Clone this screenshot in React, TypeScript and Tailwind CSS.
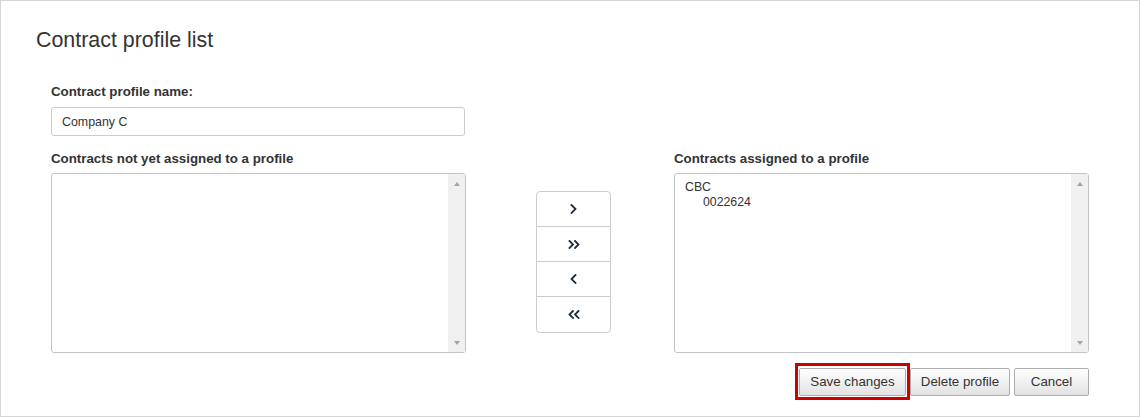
import { useState } from 'react'

type Group = { name: string; contracts: string[] }

const font = { fontFamily: '"Liberation Sans", Arial, sans-serif' }

function Chevron({ dir, double }: { dir: 'left' | 'right'; double?: boolean }) {
  const flip = dir === 'left' ? 'scale(-1,1)' : undefined
  if (double) {
    return (
      <svg width="12" height="9" viewBox="0 0 12 9" className="block">
        <g transform={flip} style={{ transformOrigin: 'center' }} fill="none" stroke="#1f2d3d" strokeWidth="1.8" strokeLinecap="square">
          <polyline points="1.5,1 5,4.5 1.5,8" />
          <polyline points="7,1 10.5,4.5 7,8" />
        </g>
      </svg>
    )
  }
  return (
    <svg width="7" height="10" viewBox="0 0 7 10" className="block">
      <g transform={flip} style={{ transformOrigin: 'center' }} fill="none" stroke="#1f2d3d" strokeWidth="1.8" strokeLinecap="square">
        <polyline points="1.5,1 5.5,5 1.5,9" />
      </g>
    </svg>
  )
}

function ListBox({ groups }: { groups: Group[] }) {
  return (
    <div className="flex h-[180px] w-[415px] rounded-[3px] border border-[#c4c4c4] bg-white">
      <div className="flex-1 px-[10px] pt-[6px] text-[12.3px] leading-[15px] text-[#333]">
        {groups.map(g => (
          <div key={g.name}>
            <div>{g.name}</div>
            {g.contracts.map(c => (
              <div key={c} className="pl-[18px]">{c}</div>
            ))}
          </div>
        ))}
      </div>
      <div className="flex w-[17px] flex-col items-center justify-between bg-[#f0f0f0] pt-[8px] pb-[7px]">
        <div className="h-0 w-0 border-x-[3.5px] border-b-[4px] border-x-transparent border-b-[#a3a3a3]" />
        <div className="h-0 w-0 border-x-[3.5px] border-t-[4px] border-x-transparent border-t-[#a3a3a3]" />
      </div>
    </div>
  )
}

function Btn({ children, w }: { children: React.ReactNode; w: string }) {
  return (
    <button className={`${w} h-[28px] rounded-[2px] border border-[#adadad] bg-gradient-to-b from-[#ffffff] to-[#e2e2e2] text-[13.3px] text-[#333]`}>
      {children}
    </button>
  )
}

export default function App() {
  const [name, setName] = useState('Company C')
  const assigned: Group[] = [{ name: 'CBC', contracts: ['0022624'] }]

  return (
    <div style={font} className="h-[417px] w-[1140px] border border-[#d6d6d6] bg-white pl-[35px] pt-[28px] text-[#333]">
      <h1 className="text-[21.4px] leading-[23px] text-[#333]">Contract profile list</h1>

      <div className="ml-[15px] mt-[31px] w-[1038px]">
        <label className="block text-[13.3px] font-bold leading-[18px]">Contract profile name:</label>
        <input
          value={name}
          onChange={e => setName(e.target.value)}
          className="mt-[6px] block h-[29px] w-[414px] rounded-[3px] border border-[#cccccc] px-[10px] text-[12.4px] text-[#333] outline-none"
        />

        <div className="mt-[14px] flex">
          <div>
            <div className="text-[13.3px] font-bold leading-[18px]">Contracts not yet assigned to a profile</div>
            <div className="mt-[5px]"><ListBox groups={[]} /></div>
          </div>

          <div className="w-[208px] pl-[70px] pt-[41px]">
            <div className="flex w-[75px] flex-col overflow-hidden rounded-[4px] border border-[#cccccc] bg-white">
              <button className="flex h-[35px] items-center justify-center border-b border-[#cccccc]"><Chevron dir="right" /></button>
              <button className="flex h-[35px] items-center justify-center border-b border-[#cccccc]"><Chevron dir="right" double /></button>
              <button className="flex h-[35px] items-center justify-center border-b border-[#cccccc]"><Chevron dir="left" /></button>
              <button className="flex h-[35px] items-center justify-center"><Chevron dir="left" double /></button>
            </div>
          </div>

          <div>
            <div className="text-[13.3px] font-bold leading-[18px]">Contracts assigned to a profile</div>
            <div className="mt-[5px]"><ListBox groups={assigned} /></div>
          </div>
        </div>

        <div className="mt-[15px] flex justify-end gap-[4px]">
          <div className="relative">
            <Btn w="w-[107px]">Save changes</Btn>
            <div className="pointer-events-none absolute -top-[5px] -bottom-[4px] -left-[4px] -right-[4px] border-[3px] border-[#cc0000]" />
          </div>
          <Btn w="w-[100px]">Delete profile</Btn>
          <Btn w="w-[75px]">Cancel</Btn>
        </div>
      </div>
    </div>
  )
}
